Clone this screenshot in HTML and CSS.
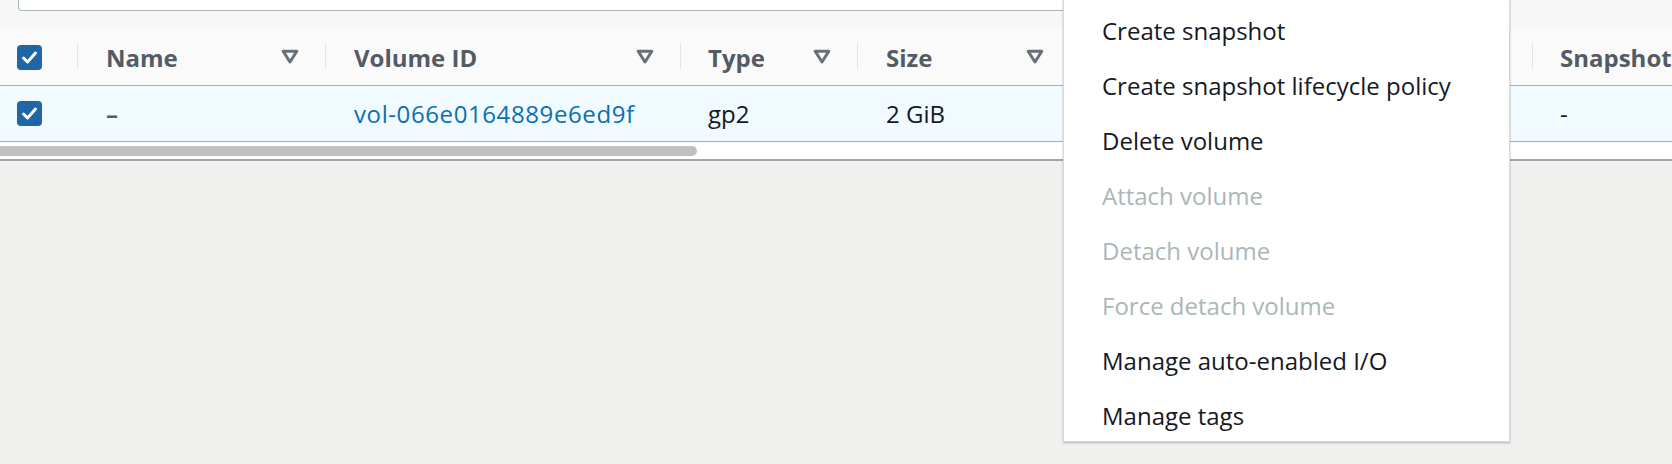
FILE: index.html
```html
<!DOCTYPE html>
<html lang="en">
<head>
<meta charset="utf-8">
<title>Volumes</title>
<link rel="stylesheet" href="styles.css">
</head>
<body>
<div class="page">
  <div class="panel">
    <div class="toolbar">
      <div class="search"></div>
    </div>
    <div class="table">
      <div class="tr thead">
        <div class="cell c-check"><span class="checkbox"><svg viewBox="0 0 25 25" width="25" height="25"><path d="M6.5 13 L10.5 17 L18.5 8" fill="none" stroke="#fff" stroke-width="3" stroke-linecap="round" stroke-linejoin="round"/></svg></span></div>
        <div class="cell c-name sep"><span class="th-label">Name</span><svg class="sort" viewBox="0 0 18 15" width="18" height="15"><path d="M2.2 2.2 H15.8 L9 13 Z" fill="none" stroke="#687078" stroke-width="3" stroke-linejoin="round"/></svg></div>
        <div class="cell c-vol sep"><span class="th-label">Volume ID</span><svg class="sort" viewBox="0 0 18 15" width="18" height="15"><path d="M2.2 2.2 H15.8 L9 13 Z" fill="none" stroke="#687078" stroke-width="3" stroke-linejoin="round"/></svg></div>
        <div class="cell c-type sep"><span class="th-label">Type</span><svg class="sort" viewBox="0 0 18 15" width="18" height="15"><path d="M2.2 2.2 H15.8 L9 13 Z" fill="none" stroke="#687078" stroke-width="3" stroke-linejoin="round"/></svg></div>
        <div class="cell c-size sep"><span class="th-label">Size</span><svg class="sort" viewBox="0 0 18 15" width="18" height="15"><path d="M2.2 2.2 H15.8 L9 13 Z" fill="none" stroke="#687078" stroke-width="3" stroke-linejoin="round"/></svg></div>
        <div class="cell c-hidden sep"></div>
        <div class="cell c-snap sep"><span class="th-label">Snapshot</span></div>
      </div>
      <div class="tr selected">
        <div class="cell c-check"><span class="checkbox"><svg viewBox="0 0 25 25" width="25" height="25"><path d="M6.5 13 L10.5 17 L18.5 8" fill="none" stroke="#fff" stroke-width="3" stroke-linecap="round" stroke-linejoin="round"/></svg></span></div>
        <div class="cell c-name"><span class="muted">–</span></div>
        <div class="cell c-vol"><a class="link" href="#">vol-066e0164889e6ed9f</a></div>
        <div class="cell c-type">gp2</div>
        <div class="cell c-size">2 GiB</div>
        <div class="cell c-hidden"></div>
        <div class="cell c-snap">-</div>
      </div>
    </div>
    <div class="scrollbar"><div class="thumb"></div></div>
  </div>

  <ul class="menu">
    <li class="item">Create snapshot</li>
    <li class="item">Create snapshot lifecycle policy</li>
    <li class="item">Delete volume</li>
    <li class="item disabled">Attach volume</li>
    <li class="item disabled">Detach volume</li>
    <li class="item disabled">Force detach volume</li>
    <li class="item">Manage auto-enabled I/O</li>
    <li class="item">Manage tags</li>
  </ul>
</div>
</body>
</html>
```
FILE: styles.css
```css
* { box-sizing: border-box; }

html, body {
  margin: 0;
  padding: 0;
}

body {
  background: #f0f1ee;
  font-family: "Open Sans", "Noto Sans", sans-serif;
  font-size: 24px;
  color: #16191f;
  width: 1672px;
  height: 464px;
  overflow: hidden;
}

.page {
  position: relative;
  width: 1672px;
  height: 464px;
}

.panel {
  width: 1672px;
  background: #ffffff;
  border-bottom: 2px solid #a2a6a6;
}

.toolbar {
  height: 30px;
  background: #f7f7f7;
  border-bottom: 1px solid #e6e8e8;
  padding-left: 18px;
}

.search {
  height: 11px;
  width: 1300px;
  background: #ffffff;
  border: 1px solid #aab7b8;
  border-top: none;
  border-radius: 0 0 4px 4px;
}

.table {
  display: flex;
  flex-direction: column;
}

.tr {
  display: flex;
  align-items: center;
}

.thead {
  height: 56px;
  background: #fafafa;
  margin-top: -1px;
}

.selected {
  height: 57px;
  background: #f1faff;
  border-top: 1px solid #74c0d5;
  border-bottom: 1px solid #74c0d5;
}

.cell {
  position: relative;
  height: 100%;
  display: flex;
  align-items: center;
  flex: none;
  white-space: nowrap;
}

.c-check { width: 77px; padding-left: 17px; }
.c-name { width: 248px; padding-left: 29px; }
.c-vol { width: 355px; padding-left: 29px; }
.c-type { width: 177px; padding-left: 28px; }
.c-size { width: 213px; padding-left: 29px; }
.c-hidden { width: 462px; }
.c-snap { width: 140px; padding-left: 28px; }

.sep::before {
  content: "";
  position: absolute;
  left: 0;
  top: 14px;
  height: 26px;
  width: 1px;
  background: #e4e6e6;
}

.th-label {
  font-weight: 700;
  color: #545b64;
}

.sort {
  position: absolute;
  right: 26px;
  top: 20px;
}

.checkbox {
  display: block;
  width: 25px;
  height: 25px;
  border-radius: 4px;
  background: #1f66a9;
}

.checkbox svg { display: block; }

.thead .checkbox { margin-top: 1px; }

.muted {
  color: #545b64;
  font-weight: 700;
}

.link {
  color: #0b6fb3;
  text-decoration: none;
  letter-spacing: 0.6px;
}

.scrollbar {
  height: 17px;
  padding-top: 4px;
  background: #ffffff;
}

.thumb {
  width: 697px;
  height: 10px;
  border-radius: 0 5px 5px 0;
  background: #c0c0c0;
}

.menu {
  position: absolute;
  left: 1063px;
  top: -2px;
  width: 447px;
  height: 444px;
  margin: 0;
  padding: 5px 0 0 0;
  list-style: none;
  background: #ffffff;
  border: 1px solid #d5d9d9;
  border-top: none;
  box-shadow: 0 1px 2px rgba(0, 0, 0, 0.25);
}

.item {
  height: 55px;
  line-height: 55px;
  padding-left: 38px;
  color: #16191f;
}

.item.disabled { color: #aab7b8; }
```
